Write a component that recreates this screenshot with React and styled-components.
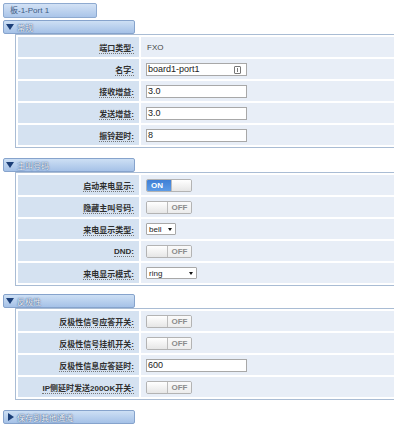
import React from 'react';
import styled, { createGlobalStyle } from 'styled-components';

const GlobalStyle = createGlobalStyle`
  body {
    margin: 0;
    background: #fff;
    font-family: "Liberation Sans", "Noto Sans CJK SC", sans-serif;
    font-size: 9px;
    color: #333;
    overflow: hidden;
  }
`;

const Page = styled.div`
  padding: 3px 0 0 3px;
  width: 400px;
`;

const Tab = styled.div`
  width: 86px;
  height: 13px;
  line-height: 13px;
  padding-left: 6px;
  box-sizing: content-box;
  border: 1px solid #8eaad0;
  border-radius: 2px;
  background: linear-gradient(#d3e2f5, #aac5e9);
  color: #3e5a82;
  font-size: 8px;
  margin-bottom: 2px;
`;

const Section = styled.div`
  margin-bottom: ${p => p.$gap || 0}px;
`;

const Header = styled.div`
  width: 128px;
  height: 12px;
  display: flex;
  align-items: center;
  gap: 3px;
  padding-left: 2px;
  border: 1px solid #86a3cc;
  border-radius: 2px;
  background: linear-gradient(#cddff4, #a5c1e7);
  color: #f3f7fc;
  text-shadow: 0 0 1px #1d3d6b, 0 0 2px #5a7cab;
  font-size: 8px;
`;

const Arrow = styled.span`
  width: 0;
  height: 0;
  ${p => p.$open
    ? `border-left: 4px solid transparent;
       border-right: 4px solid transparent;
       border-top: 6px solid #1c3f78;`
    : `border-top: 4px solid transparent;
       border-bottom: 4px solid transparent;
       border-left: 6px solid #1c3f78;
       margin-left: 2px;`}
`;

const Table = styled.table`
  margin-left: 12px;
  width: 390px;
  border: 1px solid #a9bcd4;
  border-spacing: 2px;
`;

const Label = styled.td`
  width: 116px;
  height: 20px;
  padding: 0 5px 0 0;
  background: #d5e2f1;
  text-align: right;
  font-weight: bold;
  font-size: 8px;
  color: #2f2f2f;
  white-space: nowrap;
`;

const LabelText = styled.span`
  border-bottom: 1px dotted #777;
`;

const Value = styled.td`
  height: 20px;
  padding: 0 0 0 5px;
  background: #e8eef7;
  vertical-align: middle;
`;

const Plain = styled.span`
  color: #444;
  font-size: 8px;
  padding-left: 1px;
`;

const InputBox = styled.div`
  position: relative;
  width: 98px;
  height: 11px;
  border: 1px solid #a8a8a8;
  background: #fff;
  font-size: 9px;
  line-height: 11px;
  padding-left: 1px;
  color: #222;
`;

const KeyIcon = styled.span`
  position: absolute;
  right: 5px;
  top: 2px;
  width: 5px;
  height: 6px;
  border: 1px solid #777;
  border-radius: 1px;
  &::after {
    content: '';
    position: absolute;
    left: 2px;
    top: 1px;
    width: 1px;
    height: 4px;
    background: #777;
  }
`;

const Toggle = styled.div`
  display: flex;
  width: 44px;
  height: 11px;
  border: 1px solid #b3b3b3;
  border-radius: 2px;
  overflow: hidden;
  font-size: 8px;
  font-weight: bold;
  line-height: 11px;
`;

const OnPart = styled.span`
  width: 24px;
  background: linear-gradient(#3f7fd6, #5c9be6);
  color: #fff;
  padding-left: 4px;
  box-sizing: border-box;
`;

const OffPart = styled.span`
  width: 23px;
  background: linear-gradient(#fafafa, #ececec);
  color: #8c8c8c;
  text-align: center;
`;

const Knob = styled.span`
  flex: 1;
  background: linear-gradient(#ffffff, #e6e6e6);
  border-${p => (p.$side === 'left' ? 'right' : 'left')}: 1px solid #bdbdbd;
`;

const Select = styled.div`
  display: flex;
  align-items: center;
  justify-content: space-between;
  width: ${p => p.$w}px;
  height: 10px;
  border: 1px solid #a8a8a8;
  border-radius: 1px;
  background: #fff;
  padding: 0 3px 0 2px;
  box-sizing: content-box;
  font-size: 8px;
  color: #222;
`;

const Caret = styled.span`
  width: 0;
  height: 0;
  border-left: 2px solid transparent;
  border-right: 2px solid transparent;
  border-top: 3px solid #111;
`;

const Switch = ({ on }) =>
  on ? (
    <Toggle>
      <OnPart>ON</OnPart>
      <Knob $side="right" />
    </Toggle>
  ) : (
    <Toggle>
      <Knob $side="left" />
      <OffPart>OFF</OffPart>
    </Toggle>
  );

const Row = ({ label, children }) => (
  <tr>
    <Label>
      <LabelText>{label}:</LabelText>
    </Label>
    <Value>{children}</Value>
  </tr>
);

const App = () => (
  <>
    <GlobalStyle />
    <Page>
      <Tab>板-1-Port 1</Tab>

      <Section $gap={10}>
        <Header><Arrow $open />常规</Header>
        <Table>
          <tbody>
            <Row label="端口类型"><Plain>FXO</Plain></Row>
            <Row label="名字">
              <InputBox>board1-port1<KeyIcon /></InputBox>
            </Row>
            <Row label="接收增益"><InputBox>3.0</InputBox></Row>
            <Row label="发送增益"><InputBox>3.0</InputBox></Row>
            <Row label="振铃超时"><InputBox>8</InputBox></Row>
          </tbody>
        </Table>
      </Section>

      <Section $gap={8}>
        <Header><Arrow $open />主叫号码</Header>
        <Table>
          <tbody>
            <Row label="启动来电显示"><Switch on /></Row>
            <Row label="隐藏主叫号码"><Switch /></Row>
            <Row label="来电显示类型">
              <Select $w={23}>bell<Caret /></Select>
            </Row>
            <Row label="DND"><Switch /></Row>
            <Row label="来电显示模式">
              <Select $w={44}>ring<Caret /></Select>
            </Row>
          </tbody>
        </Table>
      </Section>

      <Section $gap={10}>
        <Header><Arrow $open />反极性</Header>
        <Table>
          <tbody>
            <Row label="反极性信号应答开关"><Switch /></Row>
            <Row label="反极性信号挂机开关"><Switch /></Row>
            <Row label="反极性信息应答延时"><InputBox>600</InputBox></Row>
            <Row label="IP侧延时发送200OK开关"><Switch /></Row>
          </tbody>
        </Table>
      </Section>

      <Header><Arrow />保存到其他通道</Header>
    </Page>
  </>
);

export default App;
